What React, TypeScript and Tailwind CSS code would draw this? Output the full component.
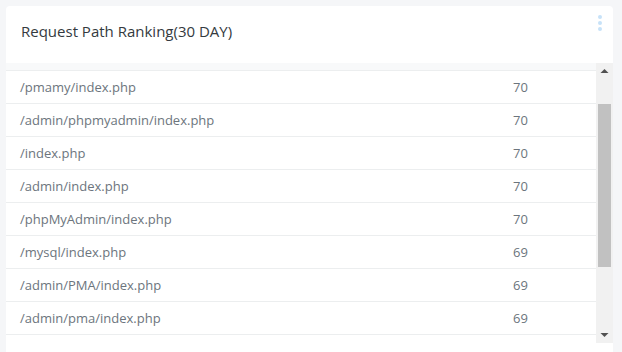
import React from "react";

const rows = [
  { path: "/pmamy/index.php", count: 70 },
  { path: "/admin/phpmyadmin/index.php", count: 70 },
  { path: "/index.php", count: 70 },
  { path: "/admin/index.php", count: 70 },
  { path: "/phpMyAdmin/index.php", count: 70 },
  { path: "/mysql/index.php", count: 69 },
  { path: "/admin/PMA/index.php", count: 69 },
  { path: "/admin/pma/index.php", count: 69 },
];

export default function App() {
  return (
    <div className="h-[352px] w-[622px] overflow-hidden bg-[#f5f6f8] pl-[6px] pt-[6px] pr-[9px]" style={{ fontFamily: "'Open Sans', sans-serif" }}>
      <div className="h-[360px] rounded-t-[4px] bg-white">
        <div className="relative flex h-[57px] items-start px-[15px] pt-[15px]">
          <h2 className="text-[15px] leading-[20px] text-[#343a40]">Request Path Ranking(30 DAY)</h2>
          <div className="absolute right-[11px] top-[9px] flex flex-col gap-[2px]">
            <span className="h-[4px] w-[4px] rounded-full bg-[#c7e2f8]" />
            <span className="h-[4px] w-[4px] rounded-full bg-[#c7e2f8]" />
            <span className="h-[4px] w-[4px] rounded-full bg-[#c7e2f8]" />
          </div>
        </div>
        <div className="flex h-[280px]">
          <div className="flex-1 overflow-hidden">
            <div className="h-[8px] border-b border-[#eceeef] bg-[#f8f9fa]" />
            {rows.map((r) => (
              <div key={r.path} className="flex h-[33px] items-center border-b border-[#eceeef] pt-[2px] text-[13px] text-[#6c757d]">
                <span className="w-[507px] pl-[14px]">{r.path}</span>
                <span>{r.count}</span>
              </div>
            ))}
          </div>
          <div className="flex w-[17px] flex-col items-center bg-[#f1f1f1]">
            <svg width="17" height="17" viewBox="0 0 17 17" className="shrink-0">
              <path d="M4.5 10 L8.5 6 L12.5 10 Z" fill="#505050" />
            </svg>
            <div className="mt-[24px] h-[163px] w-[13px] bg-[#c1c1c1]" />
            <div className="flex-1" />
            <svg width="17" height="17" viewBox="0 0 17 17" className="shrink-0">
              <path d="M4.5 7 L8.5 11 L12.5 7 Z" fill="#505050" />
            </svg>
          </div>
        </div>
      </div>
    </div>
  );
}
